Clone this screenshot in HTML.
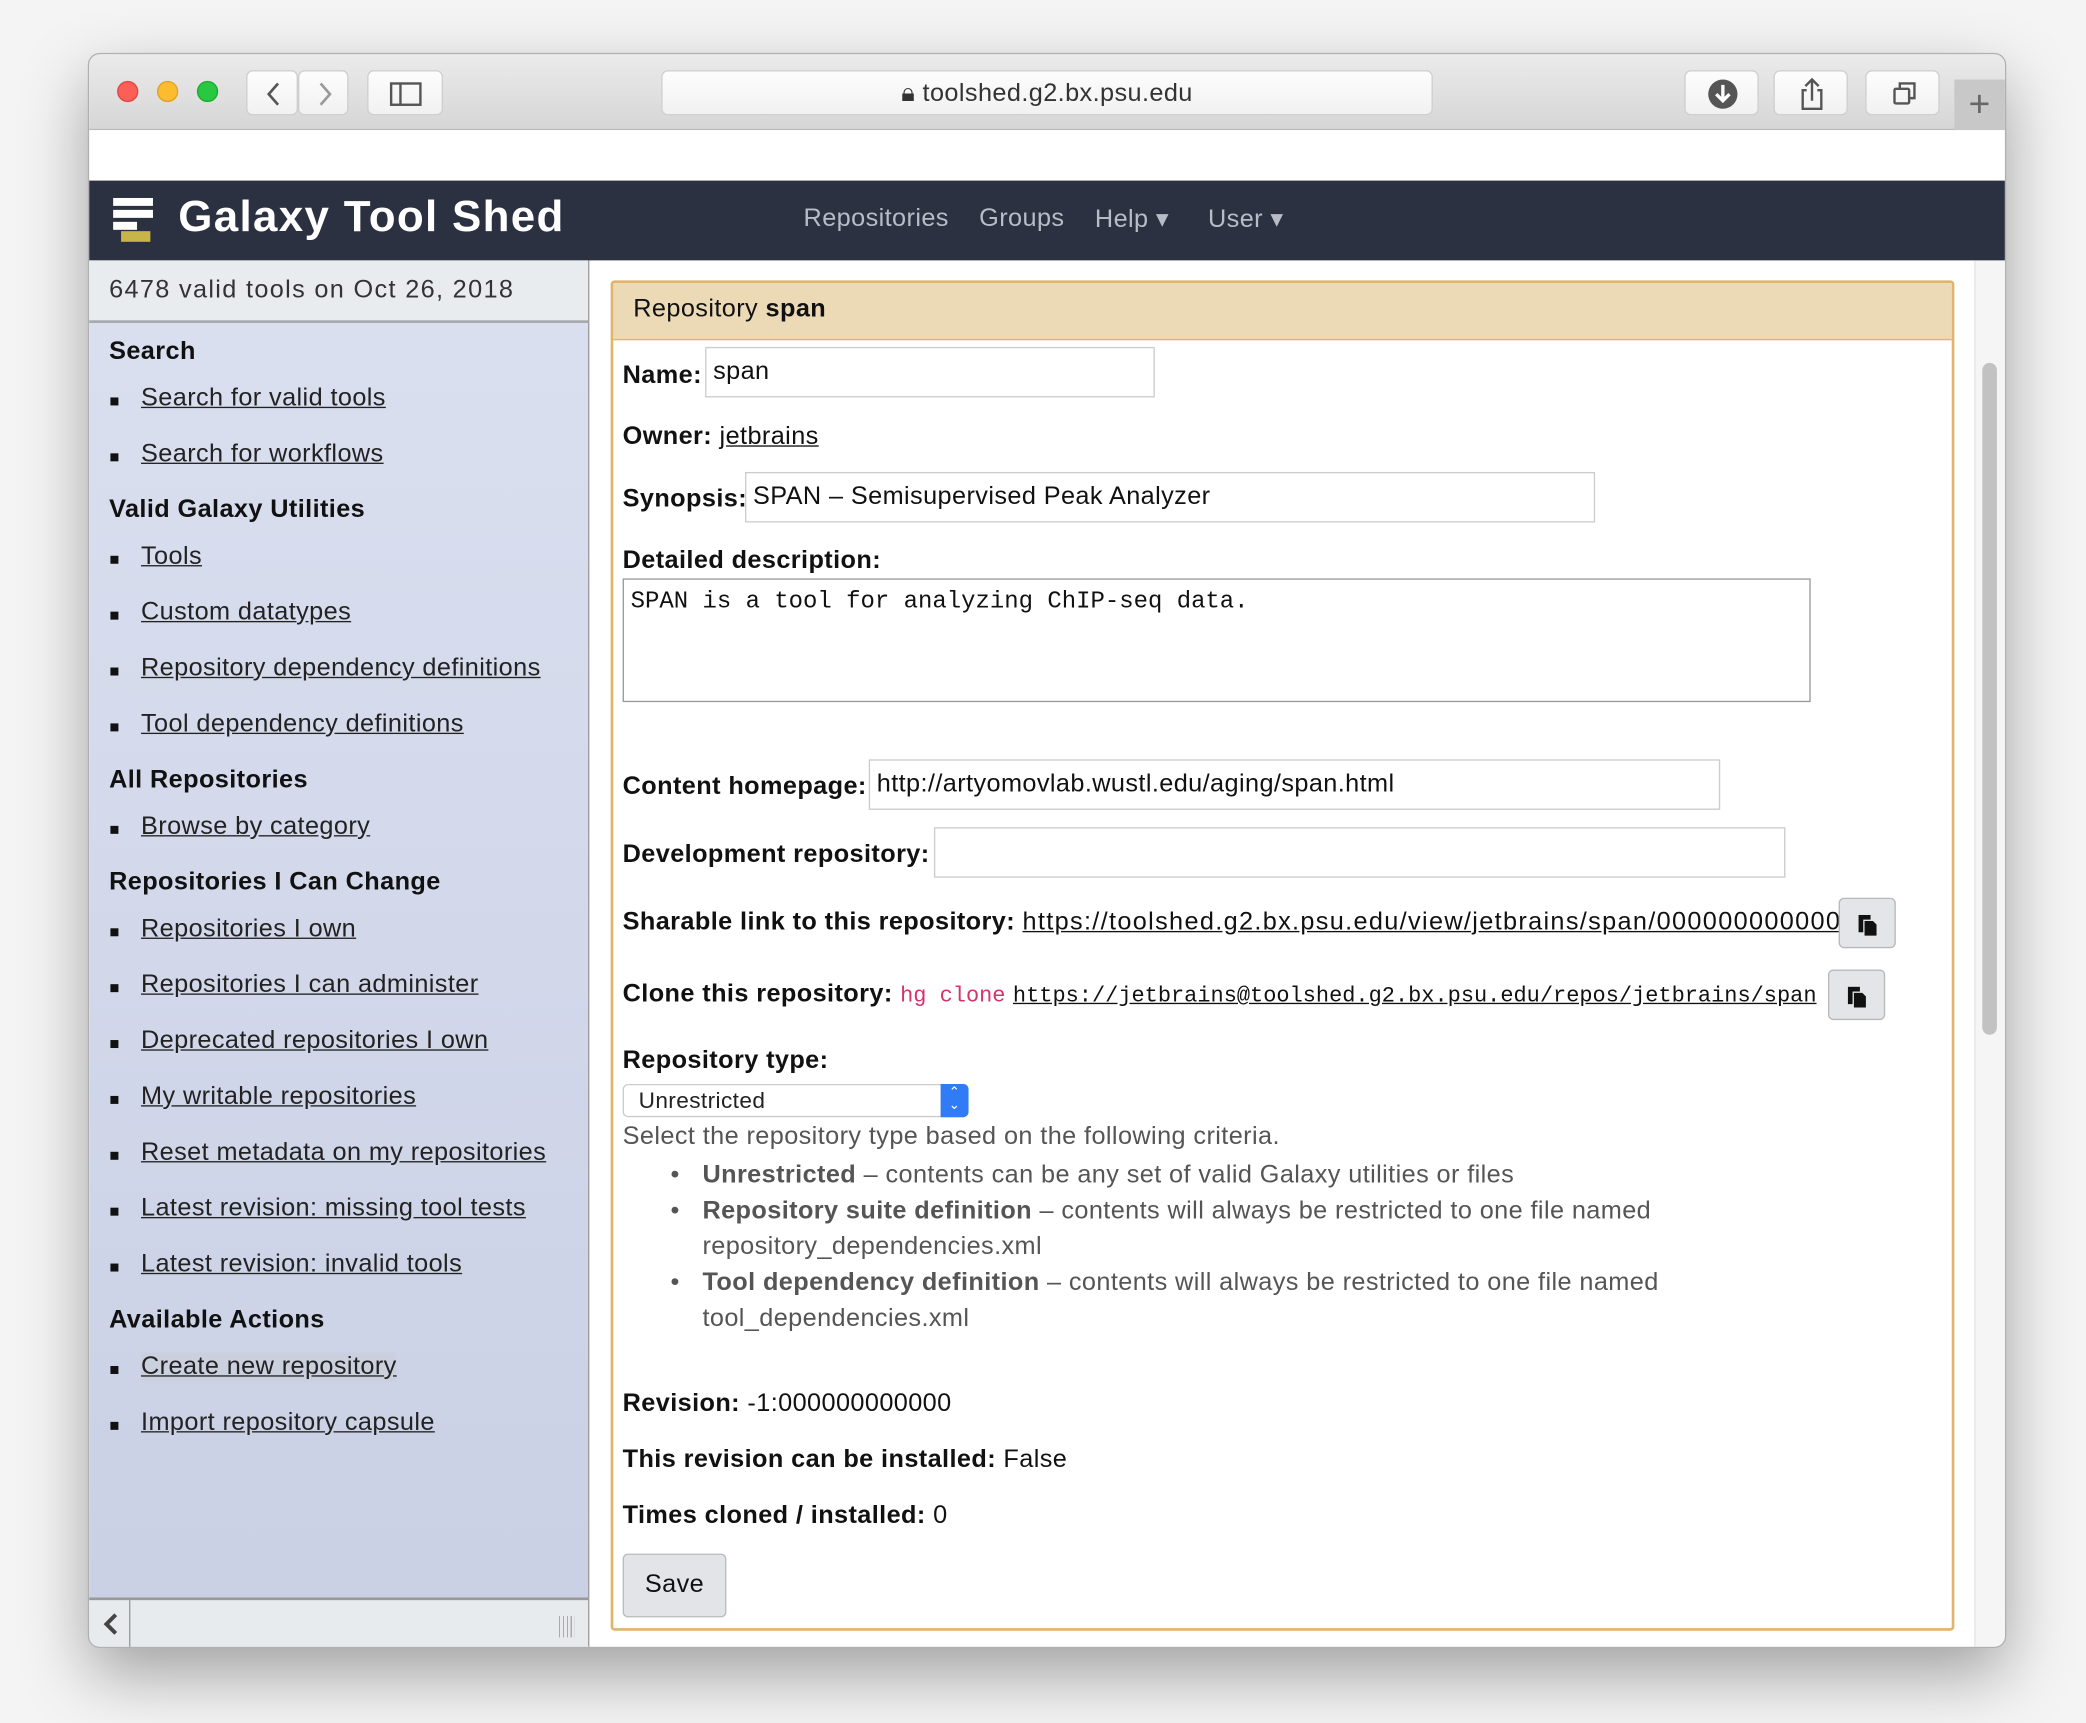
<!DOCTYPE html>
<html><head><meta charset="utf-8"><style>
*{margin:0;padding:0;box-sizing:border-box}
html,body{width:2086px;height:1722px;overflow:hidden;background:#f4f4f4}
#s{position:absolute;left:0;top:1px;width:1568px;height:1294px;transform:scale(1.3304);transform-origin:0 0;font-family:"Liberation Sans","DejaVu Sans",sans-serif;letter-spacing:.3px}
.a{position:absolute}
#win{left:67px;top:40px;width:1440px;height:1197px;border-radius:8px;overflow:hidden;box-shadow:0 0 0 1px #b0b0b0,0 20px 50px rgba(0,0,0,.35);background:#fff}
#tb{left:0;top:0;width:1440px;height:57px;background:linear-gradient(#ebebeb,#d6d6d6);border-bottom:1px solid #b8b8b8}
.dot{width:16px;height:16px;border-radius:50%;top:20px}
.btn{background:linear-gradient(#fdfdfd,#f1f1f1);border:1px solid #cfcfcf;border-radius:5px;height:34px;top:12px}
#nav{left:0;top:95px;width:1440px;height:60px;background:#2c3142}
.ni{color:#b8bcc6;font-size:19px;top:18px}
#side{left:0;top:155px;width:376px;height:1042px;background:linear-gradient(#dbe0f0,#c9d0e4);border-right:1px solid #999}
#sh{left:0;top:0;width:375px;height:47px;background:#e9ecef;border-bottom:2px solid #a5a8ad;font-size:19px;color:#333;padding:12px 15px;letter-spacing:1px}
.sec{font-weight:bold;font-size:19px;color:#111;left:15px}
.li{font-size:19px;color:#222;text-decoration:underline;left:39px}
.li:before{content:"";position:absolute;left:-23px;top:10px;width:6px;height:6px;background:#111}
#main{left:377px;top:155px;width:1040px;height:1042px;background:#fff}
#panel{left:15px;top:15px;width:1010px;height:1015px;border:2px solid #e0b46b;border-radius:3px}
#ph{left:0;top:0;width:1006px;height:43px;background:#ecdab6;border-bottom:1px solid #e0b46b;font-size:19px;padding:9px 15px;color:#111}
.lb{font-size:19px;color:#111;left:7px}
.lb b{font-weight:bold}
.in{border:1px solid #ccc;height:38px;font-size:19px;padding:7px 5px;color:#111;background:#fff}
.cp{width:43px;height:38px;border:1px solid #b8b8b8;border-radius:4px;background:#e4e5e8}
.g{color:#555;font-size:19px}
.m{font-family:'Liberation Mono',monospace;font-size:16.5px;letter-spacing:0}
</style></head><body><div id="s">
<div id="win" class="a">
 <div id="tb" class="a">
  <div class="a dot" style="left:21px;background:#fc5f57;border:1px solid #de4740"></div>
  <div class="a dot" style="left:51px;background:#fdbc2e;border:1px solid #dea123"></div>
  <div class="a dot" style="left:81px;background:#28c840;border:1px solid #1aab29"></div>
  <div class="a btn" style="left:118px;width:39px"><svg width="39" height="34"><path d="M23 9 L16 17 L23 25" stroke="#555" stroke-width="2" fill="none"/></svg></div>
  <div class="a btn" style="left:157px;width:38px"><svg width="38" height="34"><path d="M16 9 L23 17 L16 25" stroke="#999" stroke-width="2" fill="none"/></svg></div>
  <div class="a btn" style="left:209px;width:57px"><svg width="57" height="34"><rect x="17" y="9" width="22" height="16" stroke="#555" stroke-width="1.8" fill="none"/><path d="M24 9V25" stroke="#555" stroke-width="1.8"/></svg></div>
  <div class="a btn" style="left:430px;width:580px;text-align:center;font-size:19px;color:#333;padding-top:6px">🔒︎ toolshed.g2.bx.psu.edu</div>
  <div class="a btn" style="left:1199px;width:56px"><svg width="56" height="34"><circle cx="28" cy="17" r="11" fill="#555"/><path d="M28 10V22M23 17L28 22L33 17" stroke="#fff" stroke-width="2.5" fill="none"/></svg></div>
  <div class="a btn" style="left:1266px;width:56px"><svg width="56" height="34"><path d="M24 14H21V28H35V14H32M28 22V6M23 11L28 6L33 11" stroke="#555" stroke-width="1.8" fill="none"/></svg></div>
  <div class="a btn" style="left:1335px;width:56px"><svg width="56" height="34"><rect x="21" y="13" width="11" height="11" stroke="#555" stroke-width="1.8" fill="none" rx="1"/><path d="M25 13V9H36V20H32" stroke="#555" stroke-width="1.8" fill="none"/></svg></div>
  <div class="a" style="left:1402px;top:19px;width:38px;height:38px;background:#c8c8c8;color:#666;font-size:28px;text-align:center;line-height:38px">+</div>
 </div>
 <div id="nav" class="a">
  <svg class="a" style="left:18px;top:13px" width="40" height="34"><rect x="0" y="0" width="30" height="6" fill="#fff"/><rect x="0" y="9" width="30" height="6" fill="#fff"/><rect x="0" y="18" width="18" height="6" fill="#fff"/><rect x="6" y="25" width="22" height="8" fill="#d9c44a" opacity=".9"/></svg>
  <div class="a" style="left:67px;top:8px;color:#fff;font-size:33px;font-weight:bold;letter-spacing:1px">Galaxy Tool Shed</div>
  <div class="a ni" style="left:537px">Repositories</div>
  <div class="a ni" style="left:669px">Groups</div>
  <div class="a ni" style="left:756px">Help ▾</div>
  <div class="a ni" style="left:841px">User ▾</div>
 </div>
 <div id="side" class="a">
  <div id="sh" class="a">6478 valid tools on Oct 26, 2018</div>
  <div class="a sec" style="top:58px">Search</div>
  <div class="a li" style="top:93px">Search for valid tools</div>
  <div class="a li" style="top:135px">Search for workflows</div>
  <div class="a sec" style="top:177px">Valid Galaxy Utilities</div>
  <div class="a li" style="top:212px">Tools</div>
  <div class="a li" style="top:254px">Custom datatypes</div>
  <div class="a li" style="top:296px">Repository dependency definitions</div>
  <div class="a li" style="top:338px">Tool dependency definitions</div>
  <div class="a sec" style="top:380px">All Repositories</div>
  <div class="a li" style="top:415px">Browse by category</div>
  <div class="a sec" style="top:457px">Repositories I Can Change</div>
  <div class="a li" style="top:492px">Repositories I own</div>
  <div class="a li" style="top:534px">Repositories I can administer</div>
  <div class="a li" style="top:576px">Deprecated repositories I own</div>
  <div class="a li" style="top:618px">My writable repositories</div>
  <div class="a li" style="top:660px">Reset metadata on my repositories</div>
  <div class="a li" style="top:702px">Latest revision: missing tool tests</div>
  <div class="a li" style="top:744px">Latest revision: invalid tools</div>
  <div class="a sec" style="top:786px">Available Actions</div>
  <div class="a li" style="top:821px;background:#cbd0df">Create new repository</div>
  <div class="a li" style="top:863px">Import repository capsule</div>
  <div class="a" style="left:0;top:1005px;width:375px;height:37px;background:#e8ebee;border-top:2px solid #999">
   <svg class="a" style="left:8px;top:8px" width="16" height="20"><path d="M12 3L5 10L12 17" stroke="#444" stroke-width="3" fill="none"/></svg>
   <div class="a" style="left:30px;top:0;width:1px;height:37px;background:#999"></div>
   <div class="a" style="left:353px;top:12px;width:12px;height:16px;background:repeating-linear-gradient(90deg,#aaa 0 1px,transparent 1px 3px)"></div>
  </div>
 </div>
 <div id="main" class="a">
  <div id="panel" class="a">
   <div id="ph" class="a">Repository <b>span</b></div>
   <div class="a lb" style="top:59px"><b>Name:</b></div>
   <div class="a in" style="left:69px;top:48px;width:338px">span</div>
   <div class="a lb" style="top:105px"><b>Owner:</b> <u>jetbrains</u></div>
   <div class="a lb" style="top:152px"><b>Synopsis:</b></div>
   <div class="a in" style="left:99px;top:142px;width:639px">SPAN – Semisupervised Peak Analyzer</div>
   <div class="a lb" style="top:198px"><b>Detailed description:</b></div>
   <div class="a in m" style="left:7px;top:222px;width:893px;height:93px;border-color:#999;font-size:18px;padding:7px 5px">SPAN is a tool for analyzing ChIP-seq data.</div>
   <div class="a lb" style="top:368px"><b>Content homepage:</b></div>
   <div class="a in" style="left:192px;top:358px;width:640px">http://artyomovlab.wustl.edu/aging/span.html</div>
   <div class="a lb" style="top:419px"><b>Development repository:</b></div>
   <div class="a in" style="left:241px;top:409px;width:640px"></div>
   <div class="a lb" style="top:470px"><b>Sharable link to this repository:</b> <u style="letter-spacing:1px">https://toolshed.g2.bx.psu.edu/view/jetbrains/span/000000000000</u></div>
   <div class="a cp" style="left:921px;top:462px"><svg width="43" height="38"><rect x="14" y="12" width="9" height="13" fill="#111"/><path d="M18 16H25L28 19V28H18Z" fill="#111" stroke="#e4e5e8" stroke-width="1"/></svg></div>
   <div class="a lb" style="top:524px"><b>Clone this repository:</b> <span class="m" style="color:#d6336c">hg clone</span> <u class="m">https://jetbrains@toolshed.g2.bx.psu.edu/repos/jetbrains/span</u></div>
   <div class="a cp" style="left:913px;top:516px"><svg width="43" height="38"><rect x="14" y="12" width="9" height="13" fill="#111"/><path d="M18 16H25L28 19V28H18Z" fill="#111" stroke="#e4e5e8" stroke-width="1"/></svg></div>
   <div class="a lb" style="top:574px"><b>Repository type:</b></div>
   <div class="a" style="left:7px;top:602px;width:260px;height:25px;border:1px solid #ccc;border-radius:4px;background:#fff;font-size:17px;padding:2px 11px;color:#222">Unrestricted<div class="a" style="right:-1px;top:-1px;width:21px;height:25px;background:#2f7cf6;border-radius:0 4px 4px 0;color:#fff;font-size:10px;text-align:center;line-height:10px;padding-top:2px">⌃<br>⌄</div></div>
   <div class="a g" style="left:7px;top:631px">Select the repository type based on the following criteria.</div>
   <div class="a g" style="left:67px;top:657px;line-height:27px;width:850px">
    <div style="position:relative"><span class="a" style="left:-24px">•</span><b>Unrestricted</b> – contents can be any set of valid Galaxy utilities or files</div>
    <div style="position:relative"><span class="a" style="left:-24px">•</span><b>Repository suite definition</b> – contents will always be restricted to one file named repository_dependencies.xml</div>
    <div style="position:relative"><span class="a" style="left:-24px">•</span><b>Tool dependency definition</b> – contents will always be restricted to one file named tool_dependencies.xml</div>
   </div>
   <div class="a lb" style="top:832px"><b>Revision:</b> -1:000000000000</div>
   <div class="a lb" style="top:874px"><b>This revision can be installed:</b> False</div>
   <div class="a lb" style="top:916px"><b>Times cloned / installed:</b> 0</div>
   <div class="a" style="left:7px;top:955px;width:78px;height:48px;border:1px solid #bbb;border-radius:4px;background:#e2e4e8;font-size:19px;text-align:center;line-height:46px;color:#111">Save</div>
  </div>
 </div>
 <div class="a" style="left:1417px;top:155px;width:23px;height:1042px;background:#f5f5f5;border-left:1px solid #e5e5e5"><div class="a" style="left:5px;top:77px;width:11px;height:505px;background:#c2c2c2;border-radius:6px"></div></div>
</div>
</div></body></html>
